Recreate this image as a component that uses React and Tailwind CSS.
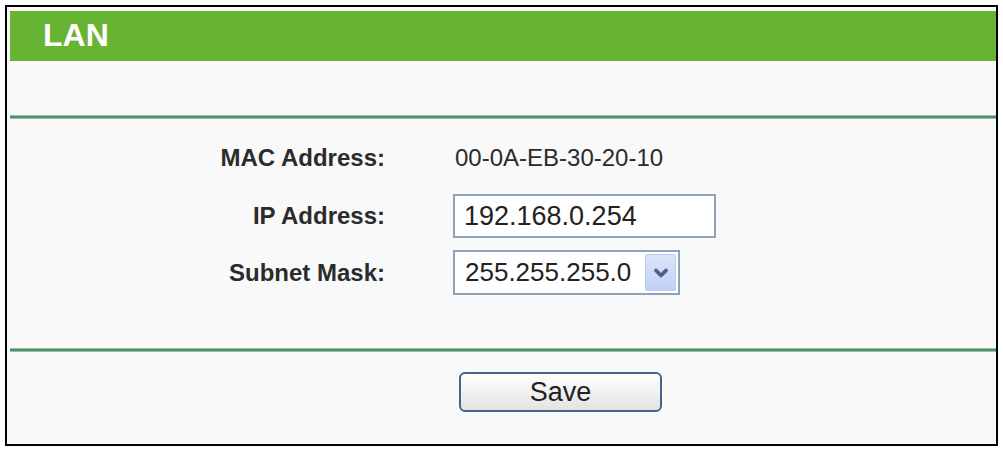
import { ChevronDown } from 'lucide-react'

const font = { fontFamily: '"Liberation Sans", Arial, sans-serif' }

function Divider() {
  return (
    <div className="h-[4px] bg-gradient-to-b from-[#b9dcc6] via-[#2f7550] to-[#b9dcc6]" />
  )
}

function Row({ label, children, className = '' }) {
  return (
    <div className={`flex items-center ${className}`}>
      <div className="w-[375px] shrink-0 text-right text-[24px] font-bold text-[#2b2b2b]">{label}</div>
      <div className="ml-[68px] flex items-center">{children}</div>
    </div>
  )
}

export default function App() {
  return (
    <div className="min-h-screen bg-white p-[5px]" style={font}>
      <div className="h-[441px] w-[993px] border-2 border-black bg-[#f9f9f9] pl-[3px] pt-[4px]">
        {/* Title bar */}
        <div className="flex h-[50px] items-center bg-[#67b332] pb-[3px] pl-[33px] text-[32px] font-bold text-white">
          LAN
        </div>

        <div className="mt-[54px]">
          <Divider />
        </div>

        {/* Settings */}
        <div className="pt-[21px]">
          <Row label="MAC Address:" className="h-[36px]">
            <span className="pl-[2px] text-[24px] text-[#2b2b2b]">00-0A-EB-30-20-10</span>
          </Row>
          <Row label="IP Address:" className="mt-[18px]">
            <div className="flex h-[44px] w-[263px] items-center border-2 border-[#8fa3b8] bg-white pl-[9px] text-[27px] text-[#222]">
              192.168.0.254
            </div>
          </Row>
          <Row label="Subnet Mask:" className="mt-[12px]">
            <div className="flex h-[45px] w-[227px] items-center justify-between border-2 border-[#8fa3b8] bg-white pl-[10px] pr-[2px] text-[26px] text-[#222]">
              <span>255.255.255.0</span>
              <span className="flex h-[37px] w-[31px] items-center justify-center rounded-[2px] border border-[#b9cbee] bg-gradient-to-b from-[#dbe6fb] to-[#bfd1f4]">
                <ChevronDown className="h-[20px] w-[20px] text-[#4d5f86]" strokeWidth={4.5} />
              </span>
            </div>
          </Row>
        </div>

        <div className="mt-[53px]">
          <Divider />
        </div>

        <div className="flex pl-[449px] pt-[20px]">
          <button className="flex h-[40px] w-[203px] items-center justify-center rounded-[6px] border-2 border-[#4a6485] bg-gradient-to-b from-white to-[#e3e3e3] text-[27px] text-[#222]">
            Save
          </button>
        </div>
      </div>
    </div>
  )
}
